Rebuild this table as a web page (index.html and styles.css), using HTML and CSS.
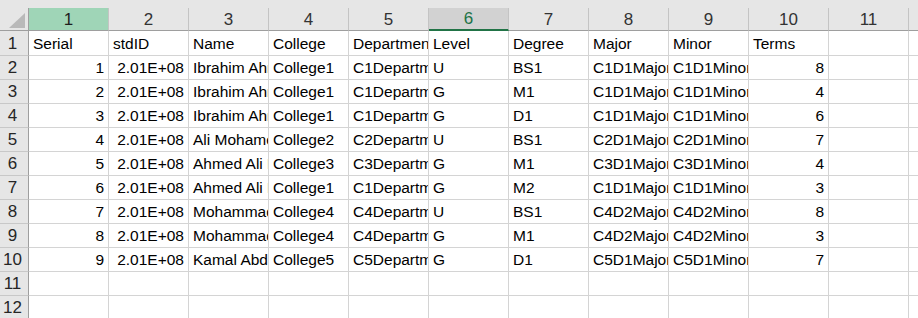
FILE: index.html
```html
<!DOCTYPE html>
<html>
<head>
<meta charset="utf-8">
<link rel="stylesheet" href="styles.css">
</head>
<body>
<div class="sheet">
  <div class="grid" id="grid">
    <div class="corner"><svg width="28" height="22" viewBox="0 0 28 22"><polygon points="9,20 25,20 25,5" fill="#b9b9b9"/></svg></div>
    <div class="ch sel">1</div>
    <div class="ch">2</div>
    <div class="ch">3</div>
    <div class="ch">4</div>
    <div class="ch">5</div>
    <div class="ch act">6</div>
    <div class="ch">7</div>
    <div class="ch">8</div>
    <div class="ch">9</div>
    <div class="ch">10</div>
    <div class="ch">11</div>
    <div class="ch last"></div>
  </div>
</div>
<script>
(function(){
  var rows = [
    ["Serial","stdID","Name","College","Department","Level","Degree","Major","Minor","Terms"],
    ["1","2.01E+08","Ibrahim Ahmed","College1","C1Department","U","BS1","C1D1Major","C1D1Minor","8"],
    ["2","2.01E+08","Ibrahim Ahmed","College1","C1Department","G","M1","C1D1Major","C1D1Minor","4"],
    ["3","2.01E+08","Ibrahim Ahmed","College1","C1Department","G","D1","C1D1Major","C1D1Minor","6"],
    ["4","2.01E+08","Ali Mohamed","College2","C2Department","U","BS1","C2D1Major","C2D1Minor","7"],
    ["5","2.01E+08","Ahmed Ali Hassan","College3","C3Department","G","M1","C3D1Major","C3D1Minor","4"],
    ["6","2.01E+08","Ahmed Ali Hassan","College1","C1Department","G","M2","C1D1Major","C1D1Minor","3"],
    ["7","2.01E+08","Mohammad Saleh","College4","C4Department","U","BS1","C4D2Major","C4D2Minor","8"],
    ["8","2.01E+08","Mohammad Saleh","College4","C4Department","G","M1","C4D2Major","C4D2Minor","3"],
    ["9","2.01E+08","Kamal Abdullah","College5","C5Department","G","D1","C5D1Major","C5D1Minor","7"],
    [],[]
  ];
  var g = document.getElementById('grid');
  var html = '';
  rows.forEach(function(r, i){
    html += '<div class="rh">' + (i+1) + '</div>';
    for (var c = 0; c < 11; c++) {
      var v = r[c] || '';
      var num = i > 0 && (c === 0 || c === 1 || c === 9) && v !== '';
      html += '<div class="cell' + (num ? ' num' : '') + '">' + v + '</div>';
    }
    html += '<div class="cell last"></div>';
  });
  g.insertAdjacentHTML('beforeend', html);
})();
</script>
</body>
</html>
```

FILE: styles.css
```css
html, body {
  margin: 0;
  padding: 0;
  background: #ffffff;
}

.sheet {
  width: 918px;
  height: 318px;
  overflow: hidden;
  background: linear-gradient(#e6e6e6 0, #e6e6e6 8px, #ffffff 8px);
  padding-top: 8px;
  box-sizing: border-box;
  font-family: "Liberation Sans", Arial, sans-serif;
}

.grid {
  display: grid;
  grid-template-columns: 29px repeat(11, 80px) 9px;
  grid-template-rows: 23px 25px repeat(11, 24px);
}

.corner {
  background: #e6e6e6;
  border-right: 1px solid #9e9e9e;
  border-bottom: 1px solid #9e9e9e;
  box-sizing: border-box;
  display: flex;
  align-items: flex-end;
}

.corner svg {
  display: block;
}

.ch {
  background: #e6e6e6;
  border-right: 1px solid #c4c4c4;
  border-bottom: 1px solid #9e9e9e;
  box-sizing: border-box;
  display: flex;
  align-items: center;
  justify-content: center;
  font-size: 17px;
  color: #333333;
  padding-top: 1px;
}

.ch.sel {
  background: #9fd5b7;
  color: #1e1e1e;
}

.ch.act {
  background: #d2d2d2;
  color: #217346;
  border-bottom: 2px solid #217346;
}

.ch.last {
  border-right: none;
}

.rh {
  background: #e6e6e6;
  border-right: 1px solid #9e9e9e;
  border-bottom: 1px solid #c8c8c8;
  box-sizing: border-box;
  display: flex;
  align-items: flex-end;
  justify-content: center;
  padding: 0 3px 2px 0;
  font-size: 17px;
  line-height: 19px;
  color: #262626;
}

.cell {
  border-right: 1px solid #d4d4d4;
  border-bottom: 1px solid #d4d4d4;
  box-sizing: border-box;
  display: flex;
  align-items: flex-end;
  padding: 0 0 2px 4px;
  font-size: 15.5px;
  line-height: 19px;
  color: #000000;
  white-space: nowrap;
  overflow: hidden;
}

.cell.num {
  justify-content: flex-end;
  padding: 0 4px 2px 0;
}

.cell.last {
  border-right: none;
}
```
